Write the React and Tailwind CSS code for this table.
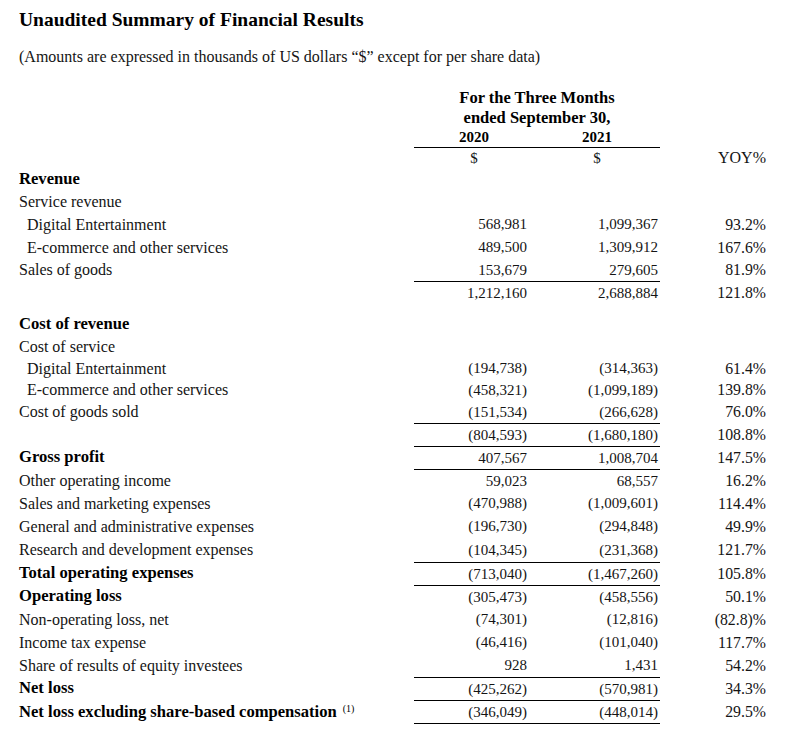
import React from "react";

const rows = [
  { label: "Revenue", bold: true, h: "h-[22px]" },
  { label: "Service revenue", h: "h-[23px]" },
  { label: "Digital Entertainment", indent: true, a: "568,981", b: "1,099,367", y: "93.2%", h: "h-[23px]" },
  { label: "E-commerce and other services", indent: true, a: "489,500", b: "1,309,912", y: "167.6%", h: "h-[23px]" },
  { label: "Sales of goods", a: "153,679", b: "279,605", y: "81.9%", h: "h-[22px]" },
  { label: "", a: "1,212,160", b: "2,688,884", y: "121.8%", top: true, h: "h-[23px]" },
  { spacer: true },
  { label: "Cost of revenue", bold: true, h: "h-[23px]" },
  { label: "Cost of service", h: "h-[22px]" },
  { label: "Digital Entertainment", indent: true, a: "(194,738)", b: "(314,363)", y: "61.4%", h: "h-[21px]" },
  { label: "E-commerce and other services", indent: true, a: "(458,321)", b: "(1,099,189)", y: "139.8%", h: "h-[22px]" },
  { label: "Cost of goods sold", a: "(151,534)", b: "(266,628)", y: "76.0%", h: "h-[22px]" },
  { label: "", a: "(804,593)", b: "(1,680,180)", y: "108.8%", top: true, h: "h-[23px]" },
  { label: "Gross profit", bold: true, a: "407,567", b: "1,008,704", y: "147.5%", top: true, h: "h-[23px]" },
  { label: "Other operating income", a: "59,023", b: "68,557", y: "16.2%", top: true, h: "h-[23px]" },
  { label: "Sales and marketing expenses", a: "(470,988)", b: "(1,009,601)", y: "114.4%", h: "h-[23px]" },
  { label: "General and administrative expenses", a: "(196,730)", b: "(294,848)", y: "49.9%", h: "h-[23px]" },
  { label: "Research and development expenses", a: "(104,345)", b: "(231,368)", y: "121.7%", h: "h-[24px]" },
  { label: "Total operating expenses", bold: true, a: "(713,040)", b: "(1,467,260)", y: "105.8%", top: true, h: "h-[23px]" },
  { label: "Operating loss", bold: true, a: "(305,473)", b: "(458,556)", y: "50.1%", top: true, h: "h-[23px]" },
  { label: "Non-operating loss, net", a: "(74,301)", b: "(12,816)", y: "(82.8)%", h: "h-[23px]" },
  { label: "Income tax expense", a: "(46,416)", b: "(101,040)", y: "117.7%", h: "h-[23px]" },
  { label: "Share of results of equity investees", a: "928", b: "1,431", y: "54.2%", h: "h-[23px]" },
  { label: "Net loss", bold: true, a: "(425,262)", b: "(570,981)", y: "34.3%", top: true, h: "h-[23px]" },
  { label: "Net loss excluding share-based compensation", sup: "(1)", bold: true, a: "(346,049)", b: "(448,014)", y: "29.5%", top: true, bottom: true, h: "h-[24px]" },
];

function Row({ r }) {
  if (r.spacer) return <div className="col-span-4 h-[9px]" />;
  const numBorder = (r.top ? "border-t border-black " : "") + (r.bottom ? "border-b border-black " : "");
  return (
    <>
      <div
        className={`${r.h} flex items-center ${r.indent ? "pl-[8px]" : ""} ${
          r.bold ? "font-bold text-[16.6px] text-black" : "text-[16px]"
        } whitespace-nowrap`}
      >
        {r.label}
        {r.sup && <span className="ml-[6px] text-[10px] font-normal relative -top-[4px]">{r.sup}</span>}
      </div>
      <div className={`${r.h} ${numBorder} flex items-center justify-end pr-[2px]`}>{r.a}</div>
      <div className={`${r.h} ${numBorder} flex items-center justify-end pr-[2px]`}>{r.b}</div>
      <div className={`${r.h} flex items-center justify-end text-[15.8px]`}>{r.y}</div>
    </>
  );
}

export default function App() {
  return (
    <div
      className="w-[808px] h-[731px] bg-white text-[#141414] pl-[19px] text-[15px] overflow-hidden"
      style={{ fontFamily: '"Liberation Serif", "Times New Roman", serif' }}
    >
      <div className="pt-[8px] h-[32px] leading-[24px] text-[19.5px] font-bold text-black">
        Unaudited Summary of Financial Results
      </div>
      <div className="mt-[15px] h-[20px] leading-[20px] text-[16px]">
        (Amounts are expressed in thousands of US dollars “$” except for per share data)
      </div>
      <div className="mt-[21px] grid grid-cols-[395px_115px_131px_106px]">
        <div className="h-[20px]" />
        <div className="col-span-2 h-[20px] flex items-center justify-center font-bold text-[16.5px] text-black">
          For the Three Months
        </div>
        <div className="h-[20px]" />
        <div className="h-[20px]" />
        <div className="col-span-2 h-[20px] flex items-center justify-center font-bold text-[16.5px] text-black">
          ended September 30,
        </div>
        <div className="h-[20px]" />
        <div className="h-[20px]" />
        <div className="h-[20px] border-b border-black flex items-center justify-center pl-[5px] font-bold text-black">2020</div>
        <div className="h-[20px] border-b border-black flex items-center justify-center pl-[5px] font-bold text-black">2021</div>
        <div className="h-[20px]" />
        <div className="h-[20px]" />
        <div className="h-[20px] flex items-center justify-center pl-[5px]">$</div>
        <div className="h-[20px] flex items-center justify-center pl-[5px]">$</div>
        <div className="h-[20px] flex items-center justify-end text-[16px]">YOY%</div>
        {rows.map((r, i) => (
          <Row key={i} r={r} />
        ))}
      </div>
    </div>
  );
}
